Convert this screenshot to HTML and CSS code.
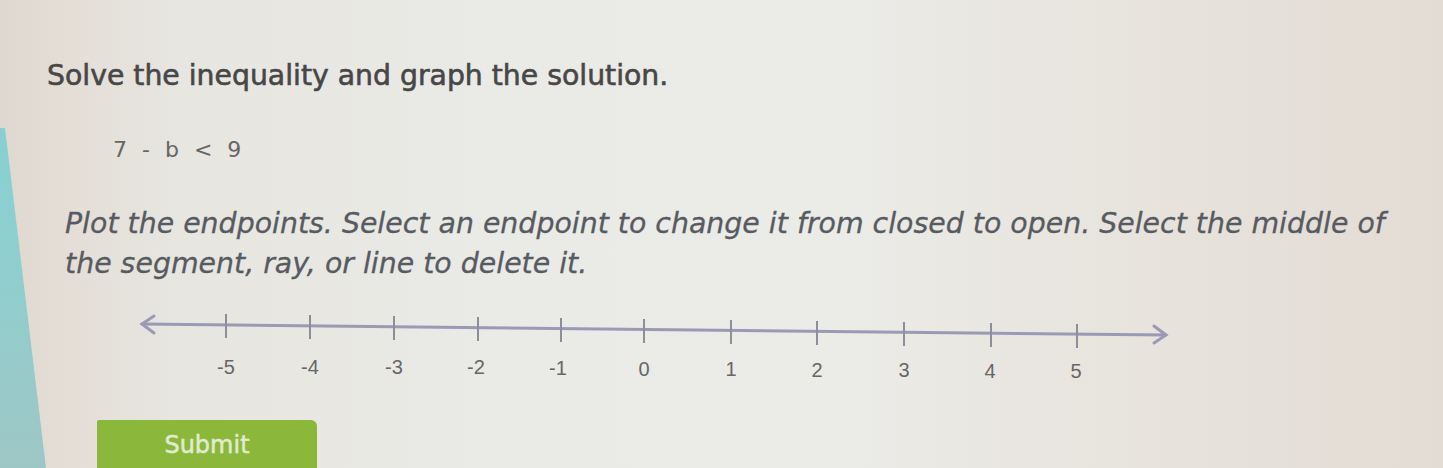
FILE: index.html
```html
<!DOCTYPE html>
<html lang="en">
<head>
<meta charset="utf-8">
<title>Solve the inequality</title>
<link rel="stylesheet" href="styles.css">
</head>
<body>
<div class="edge" aria-hidden="true"></div>
<main class="page">
  <h1 class="title">Solve the inequality and graph the solution.</h1>
  <p class="equation"><span>7</span><span class="op">-</span><span>b</span><span class="op">&lt;</span><span>9</span></p>
  <p class="instructions">Plot the endpoints. Select an endpoint to change it from closed to open. Select the middle of<br>the segment, ray, or line to delete it.</p>
  <svg class="numberline" width="1060" height="84" viewBox="130 300 1060 84" aria-label="number line">
    <g stroke="#9a9ab4" stroke-width="3" fill="none" stroke-linecap="round">
      <line x1="142" y1="322" x2="1166" y2="333"/>
      <polyline points="154,314 142,322 154,331"/>
      <polyline points="1154,324 1166,333 1154,341"/>
    </g>
    <g stroke="#8e8e9a" stroke-width="2">
      <line x1="226" y1="312" x2="226" y2="336"/>
      <line x1="310" y1="313" x2="310" y2="337"/>
      <line x1="394" y1="314" x2="394" y2="338"/>
      <line x1="478" y1="315" x2="478" y2="339"/>
      <line x1="561" y1="316" x2="561" y2="340"/>
      <line x1="644" y1="317" x2="644" y2="341"/>
      <line x1="731" y1="318" x2="731" y2="342"/>
      <line x1="817" y1="319" x2="817" y2="343"/>
      <line x1="904" y1="320" x2="904" y2="344"/>
      <line x1="991" y1="321" x2="991" y2="345"/>
      <line x1="1077" y1="322" x2="1077" y2="346"/>
    </g>
    <g class="labels" text-anchor="middle">
      <text x="226" y="372">-5</text>
      <text x="310" y="372">-4</text>
      <text x="394" y="372">-3</text>
      <text x="476" y="372">-2</text>
      <text x="558" y="373">-1</text>
      <text x="644" y="374">0</text>
      <text x="731" y="374">1</text>
      <text x="817" y="375">2</text>
      <text x="904" y="375">3</text>
      <text x="990" y="376">4</text>
      <text x="1076" y="376">5</text>
    </g>
  </svg>
  <button class="submit" type="button">Submit</button>
</main>
</body>
</html>
```

FILE: styles.css
```css
html, body {
  margin: 0;
  padding: 0;
}

body {
  width: 1443px;
  height: 468px;
  overflow: hidden;
  position: relative;
  font-family: "DejaVu Sans", Verdana, sans-serif;
  color: #4b4b4b;
  background:
    linear-gradient(to right, #dfd8d0 0px, #e4ddd6 60px, #e7e6e1 180px, #eaeae6 500px, #ebebe7 850px, #e8e4de 1100px, #e3dcd5 1443px);
}

.edge {
  position: absolute;
  left: 0;
  top: 0;
  width: 60px;
  height: 468px;
  background: linear-gradient(to bottom, #7fd0d2 0%, #8ecfd0 50%, #9dc7c5 100%);
  clip-path: polygon(0 128px, 5px 128px, 46px 468px, 0 468px);
}

.page {
  padding: 58px 0 0 47px;
}

.title {
  margin: 0;
  font-size: 28.3px;
  font-weight: normal;
  line-height: 36px;
  color: #474747;
  -webkit-text-stroke: 0.6px #474747;
}

.equation {
  margin: 41px 0 0 66px;
  font-size: 22px;
  line-height: 30px;
  color: #666;
  display: flex;
  gap: 15px;
}

.instructions {
  margin: 39px 0 0 18px;
  font-size: 28.4px;
  line-height: 40px;
  font-style: italic;
  color: #575b61;
  -webkit-text-stroke: 0.3px #575b61;
}

.numberline {
  display: block;
  margin: 18px 0 0 83px;
}

.labels {
  font-family: "Liberation Sans", Arial, sans-serif;
  font-size: 20px;
  fill: #666;
}

.submit {
  display: block;
  margin: 34px 0 0 50px;
  width: 220px;
  height: 60px;
  border: none;
  border-radius: 2px 6px 0 0;
  background: #8bb83b;
  color: #e2ebd2;
  font-family: "DejaVu Sans", Verdana, sans-serif;
  font-size: 24px;
  font-weight: normal;
  -webkit-text-stroke: 0.5px #e2ebd2;
  text-align: center;
  padding: 0 0 10px 0;
}
```
